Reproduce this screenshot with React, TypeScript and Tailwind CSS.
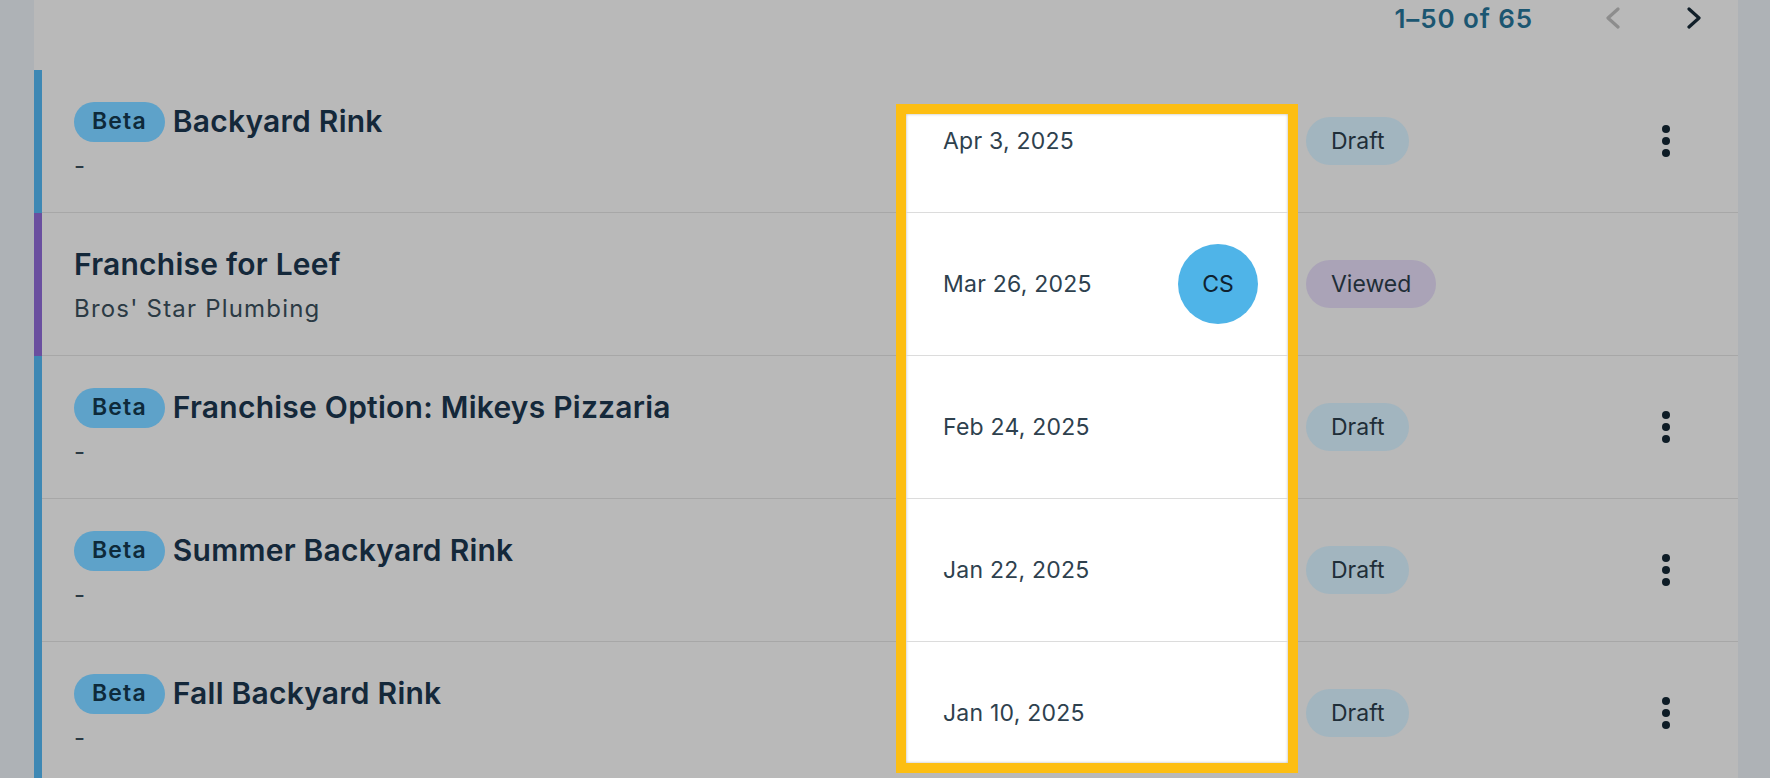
import React from 'react';

type Row = {
  title: string;
  subtitle: string;
  beta: boolean;
  accent: string;
  date: string;
  owner?: string;
  status: 'Draft' | 'Viewed';
  menu: boolean;
};

const rows: Row[] = [
  { title: 'Backyard Rink', subtitle: '-', beta: true, accent: 'bg-[#3e88b4]', date: 'Apr 3, 2025', status: 'Draft', menu: true },
  { title: 'Franchise for Leef', subtitle: "Bros' Star Plumbing", beta: false, accent: 'bg-[#6a4f9f]', date: 'Mar 26, 2025', owner: 'CS', status: 'Viewed', menu: false },
  { title: 'Franchise Option: Mikeys Pizzaria', subtitle: '-', beta: true, accent: 'bg-[#3e88b4]', date: 'Feb 24, 2025', status: 'Draft', menu: true },
  { title: 'Summer Backyard Rink', subtitle: '-', beta: true, accent: 'bg-[#3e88b4]', date: 'Jan 22, 2025', status: 'Draft', menu: true },
  { title: 'Fall Backyard Rink', subtitle: '-', beta: true, accent: 'bg-[#3e88b4]', date: 'Jan 10, 2025', status: 'Draft', menu: true },
];

const Chevron = ({ dir, color }: { dir: 'left' | 'right'; color: string }) => (
  <svg width="18" height="22" viewBox="0 0 18 22" fill="none">
    <path
      d={dir === 'right' ? 'M4 2 L14 11 L4 20' : 'M14 2 L4 11 L14 20'}
      stroke={color}
      strokeWidth="3.2"
      strokeLinecap="round"
      strokeLinejoin="round"
    />
  </svg>
);

const Kebab = () => (
  <div className="flex flex-col items-center gap-[4px]">
    <span className="w-[8px] h-[8px] rounded-full bg-[#0e1c26]" />
    <span className="w-[8px] h-[8px] rounded-full bg-[#0e1c26]" />
    <span className="w-[8px] h-[8px] rounded-full bg-[#0e1c26]" />
  </div>
);

const App: React.FC = () => {
  return (
    <div
      className="relative h-screen overflow-hidden bg-[#aeb2b6] pl-[34px] pr-[32px]"
      style={{ fontFamily: 'Inter, "Noto Sans", sans-serif' }}
    >
      <div className="h-full bg-[#b9b9b9]">
        {/* Pagination */}
        <div className="h-[70px]">
          <div className="flex h-[36px] items-center justify-end pr-[20px]">
            <span className="text-[26px] font-semibold tracking-[0.035em] text-[#1b5671]">1–50 of 65</span>
            <button className="ml-[56px] flex h-[36px] w-[48px] items-center justify-center">
              <Chevron dir="left" color="#8d8d8d" />
            </button>
            <button className="ml-[33px] flex h-[36px] w-[48px] items-center justify-center">
              <Chevron dir="right" color="#111f29" />
            </button>
          </div>
        </div>

        {/* Rows */}
        <div className="flex flex-col">
          {rows.map((r) => (
            <div key={r.title} className="flex h-[143px]">
              <div className={`w-[8px] ${r.accent}`} />
              <div className="flex flex-1 items-center border-b border-[#a7a7a7]">
                <div className="flex-1 pl-[32px]">
                  <div className="flex h-[40px] items-center gap-[8px]">
                    {r.beta && (
                      <span className="flex h-[40px] items-center rounded-full bg-[#5ea2c9] px-[18px] text-[23px] font-semibold tracking-[0.05em] text-[#0e2a3a]">
                        Beta
                      </span>
                    )}
                    <span className="text-[30px] font-semibold tracking-[0.008em] text-[#14283a]">{r.title}</span>
                  </div>
                  <div className="mt-[9px] h-[30px] text-[24px] leading-[30px] tracking-[0.05em] text-[#2b3a44]">
                    {r.subtitle}
                  </div>
                </div>
                <div className="w-[382px]" />
                <div className="w-[306px] pl-[18px]">
                  <span
                    className={`inline-flex h-[48px] items-center rounded-full px-[25px] text-[23px] text-[#1f2e38] ${
                      r.status === 'Draft' ? 'bg-[#a2b5bf]' : 'bg-[#aaa3b7]'
                    }`}
                  >
                    {r.status}
                  </span>
                </div>
                <div className="flex w-[144px] justify-center">{r.menu && <Kebab />}</div>
              </div>
            </div>
          ))}
        </div>
      </div>

      {/* Tour spotlight on the date column */}
      <div className="absolute left-[896px] top-[104px] h-[669px] w-[402px] border-[10px] border-[#fdbe12] bg-white">
        <div className="h-full overflow-hidden shadow-[inset_0_0_3px_rgba(0,0,0,0.3)]">
          <div className="-mt-[44px] flex flex-col">
            {rows.map((r) => (
              <div
                key={r.date}
                className="flex h-[143px] items-center justify-between border-b border-[#dcdcdc] pl-[37px] pr-[30px]"
              >
                <span className="text-[23px] tracking-[0.01em] text-[#2e414e]">{r.date}</span>
                {r.owner && (
                  <span className="flex h-[80px] w-[80px] items-center justify-center rounded-full bg-[#4fb4e8] text-[23px] text-[#0f2230]">
                    {r.owner}
                  </span>
                )}
              </div>
            ))}
          </div>
        </div>
      </div>
    </div>
  );
};

export default App;
